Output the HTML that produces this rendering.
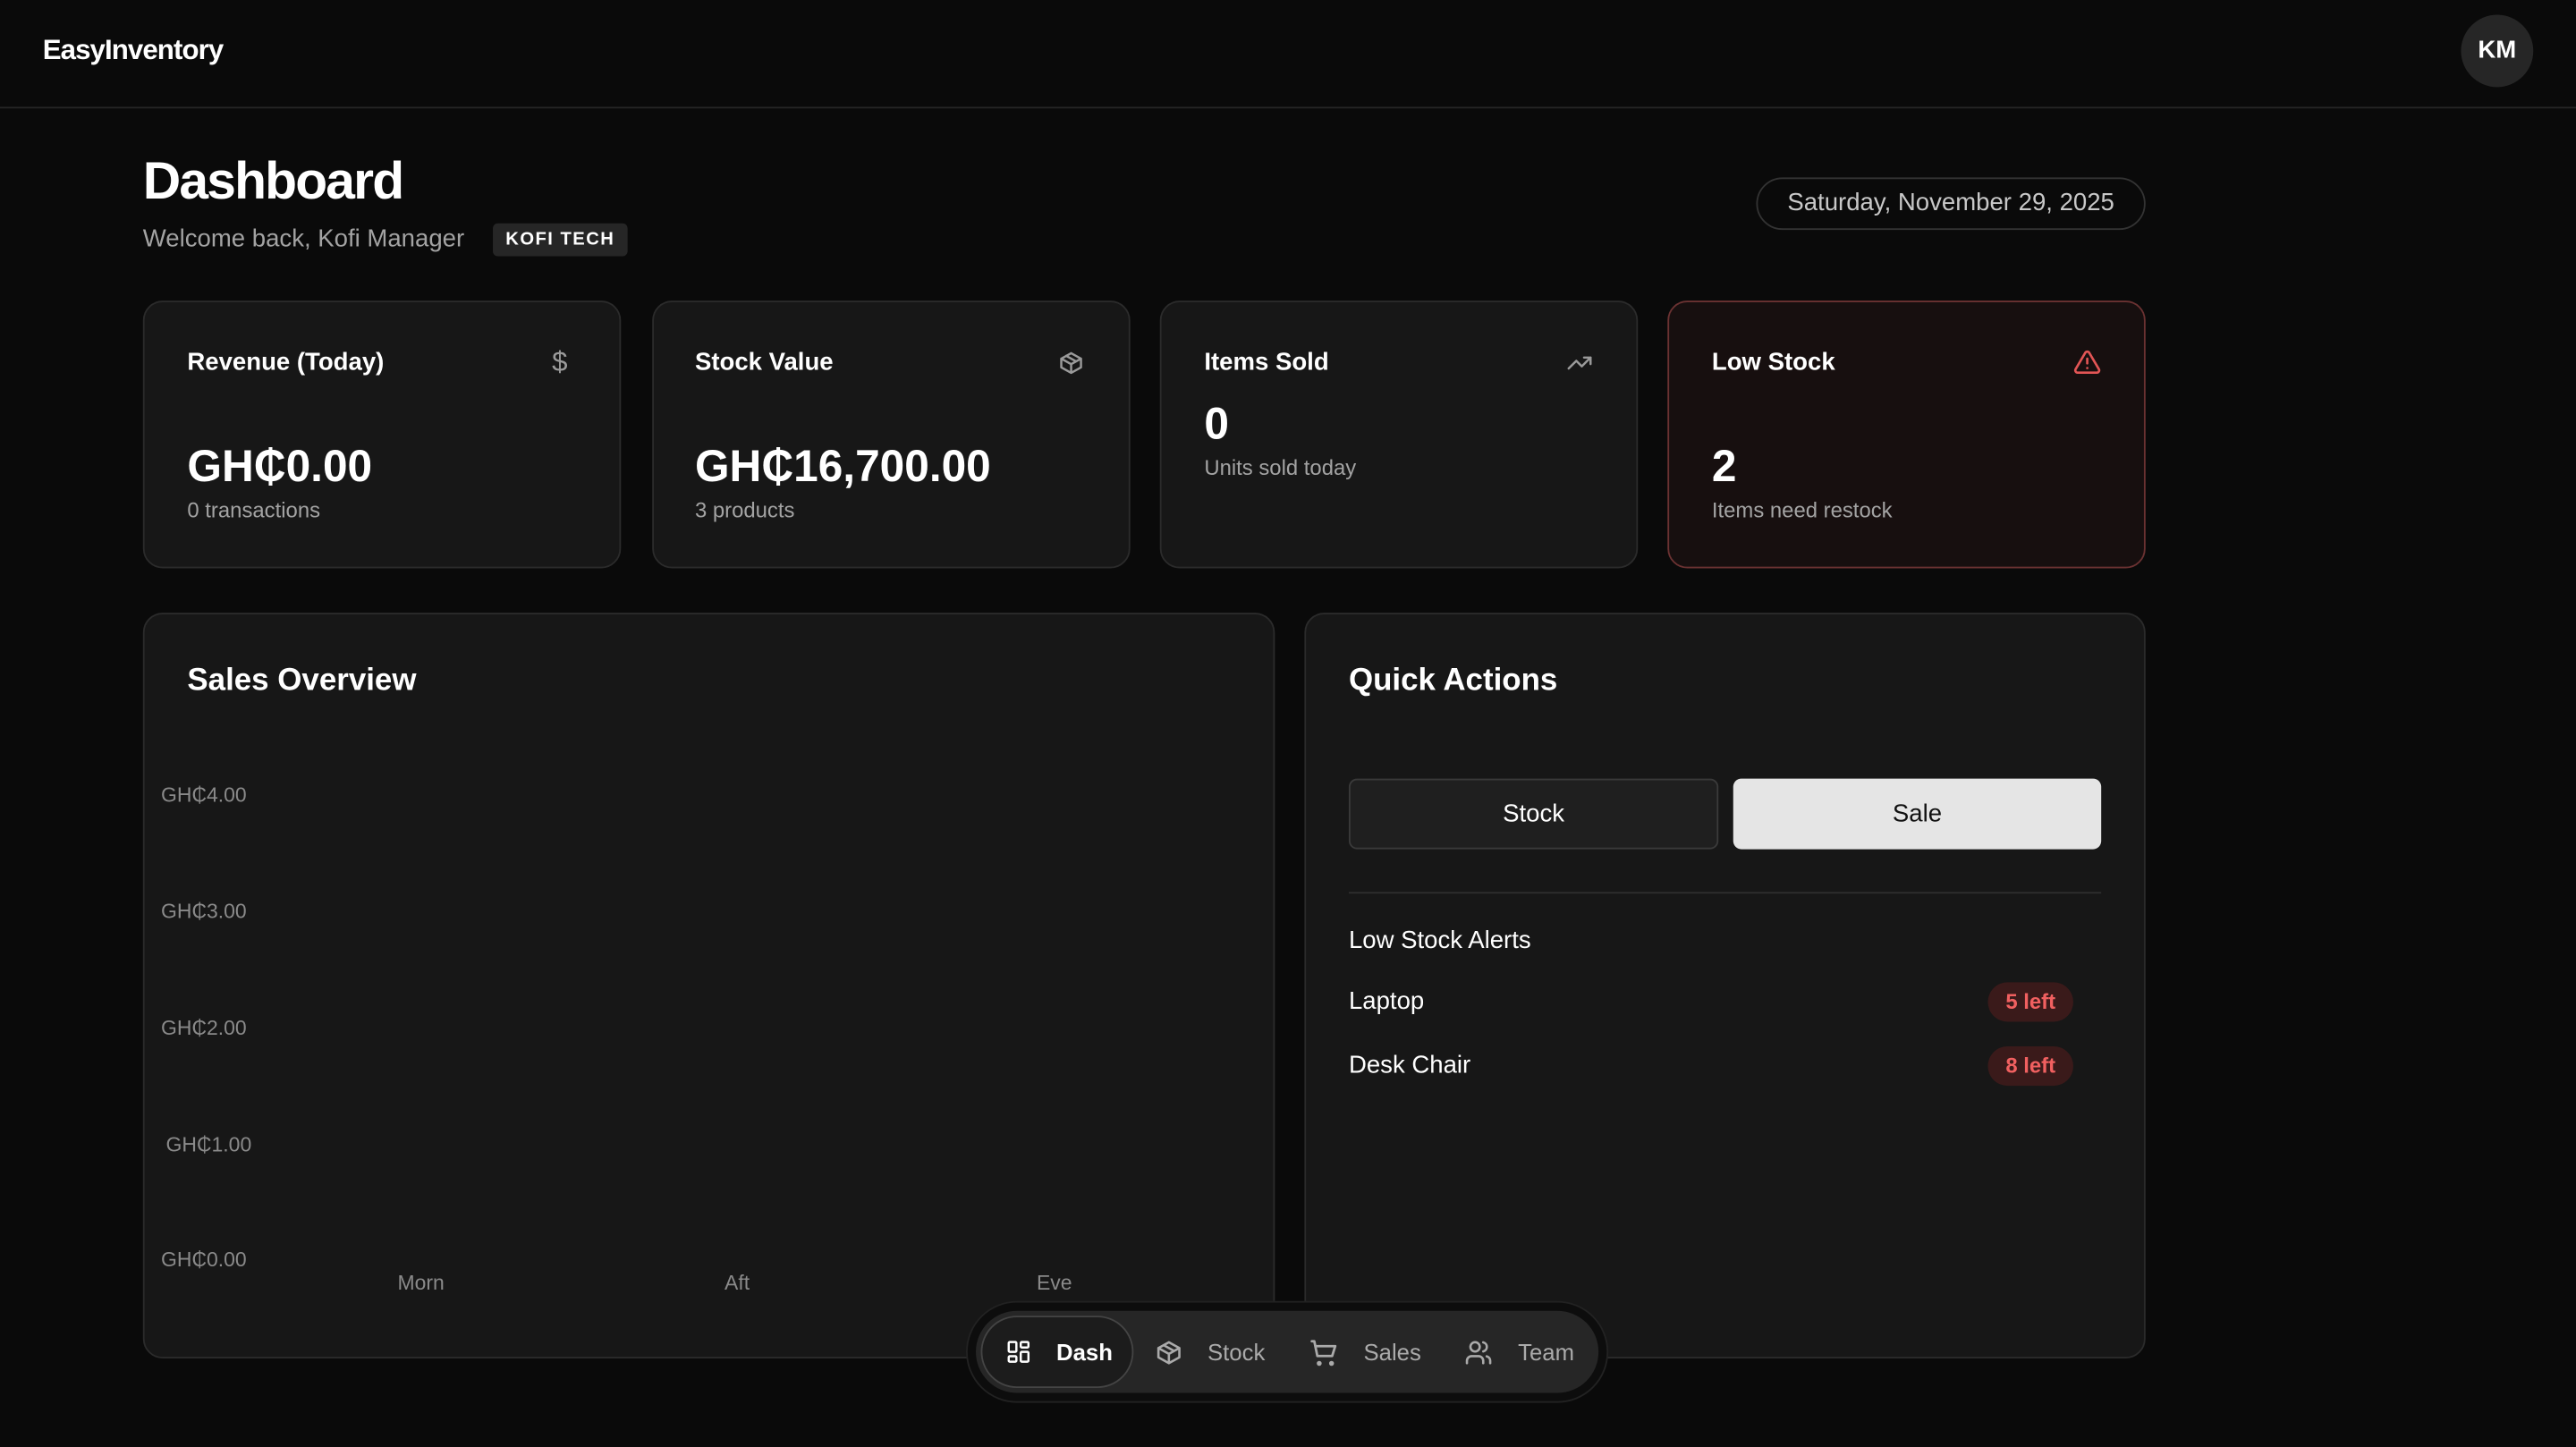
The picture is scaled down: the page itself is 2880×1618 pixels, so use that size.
<!DOCTYPE html>
<html><head><meta charset="utf-8"><style>
*{box-sizing:border-box;margin:0;padding:0}
html,body{width:2880px;height:1618px;background:#0a0a0a;overflow:hidden}
#w{width:1568px;height:881px;transform:scale(1.836735);transform-origin:0 0;position:relative;font-family:"Liberation Sans",sans-serif;color:#fff}
.a{position:absolute}
.card{position:absolute;background:#171717;border:1px solid #2b2b2b;border-radius:12px}
.t{position:absolute;font-size:15px;font-weight:bold}
.big{position:absolute;font-size:27px;font-weight:bold}
.sub{position:absolute;font-size:13px;color:#a3a3a3}
.ax{position:absolute;font-size:12.5px;color:#8a8a8a}
svg{position:absolute;fill:none;stroke-linecap:round;stroke-linejoin:round}
</style></head><body><div id="w">
<div class="a" style="left:0;top:0;width:1568px;height:66px;border-bottom:1px solid #262626"></div>
<div class="a" style="left:26px;top:21px;font-size:17px;font-weight:bold;letter-spacing:-0.5px">EasyInventory</div>
<div class="a" style="left:1498px;top:9px;width:44px;height:44px;border-radius:50%;background:#262626;font-size:15px;font-weight:bold;text-align:center;line-height:44px">KM</div>
<div class="a" style="left:87px;top:92px;font-size:32px;font-weight:bold;letter-spacing:-1px">Dashboard</div>
<div class="a" style="left:87px;top:137px;font-size:15px;color:#a3a3a3">Welcome back, Kofi Manager</div>
<div class="a" style="left:300px;top:136px;width:82px;height:20px;border-radius:3px;background:#262626;font-size:11px;font-weight:bold;letter-spacing:0.8px;text-align:center;line-height:20px">KOFI TECH</div>
<div class="a" style="left:1069px;top:108px;width:237px;height:32px;border:1px solid #333;border-radius:16px;font-size:15px;color:#c8c8c8;text-align:center;line-height:30px">Saturday, November 29, 2025</div>

<div class="card" style="left:87px;top:183px;width:291px;height:163px"></div>
<div class="t" style="left:114px;top:212px">Revenue (Today)</div>
<div class="a" style="left:336px;top:211px;font-size:17px;color:#9a9a9a">$</div>
<div class="big" style="left:114px;top:269px">GH₵0.00</div>
<div class="sub" style="left:114px;top:303px">0 transactions</div>

<div class="card" style="left:397px;top:183px;width:291px;height:163px"></div>
<div class="t" style="left:423px;top:212px">Stock Value</div>
<svg style="left:644px;top:213px" width="16" height="16" viewBox="0 0 24 24" stroke="#9a9a9a" stroke-width="2"><path d="M21 8l-9-5-9 5v8l9 5 9-5z M3 8l9 5 9-5 M12 13v8 M7.5 5.5l9 5"/></svg>
<div class="big" style="left:423px;top:269px">GH₵16,700.00</div>
<div class="sub" style="left:423px;top:303px">3 products</div>

<div class="card" style="left:706px;top:183px;width:291px;height:163px"></div>
<div class="t" style="left:733px;top:212px">Items Sold</div>
<svg style="left:953px;top:213px" width="17" height="16" viewBox="0 0 24 24" stroke="#9a9a9a" stroke-width="2"><path d="M2 17l7-7 5 5 8-8 M16 7h6v6"/></svg>
<div class="big" style="left:733px;top:243px">0</div>
<div class="sub" style="left:733px;top:277px">Units sold today</div>

<div class="card" style="left:1015px;top:183px;width:291px;height:163px;background:#170f0f;border-color:#6b3232"></div>
<div class="t" style="left:1042px;top:212px">Low Stock</div>
<svg style="left:1262px;top:212px" width="17" height="17" viewBox="0 0 24 24" stroke="#e25555" stroke-width="2"><path d="M10.3 3.9L2 18a2 2 0 0 0 1.7 3h16.6a2 2 0 0 0 1.7-3L13.7 3.9a2 2 0 0 0-3.4 0z M12 9v4 M12 17h.01"/></svg>
<div class="big" style="left:1042px;top:269px">2</div>
<div class="sub" style="left:1042px;top:303px">Items need restock</div>

<div class="card" style="left:87px;top:373px;width:689px;height:454px"></div>
<div class="a" style="left:114px;top:404px;font-size:19px;font-weight:bold">Sales Overview</div>
<div class="ax" style="left:98px;top:477px">GH₵4.00</div>
<div class="ax" style="left:98px;top:548px">GH₵3.00</div>
<div class="ax" style="left:98px;top:619px">GH₵2.00</div>
<div class="ax" style="left:101px;top:690px">GH₵1.00</div>
<div class="ax" style="left:98px;top:760px">GH₵0.00</div>
<div class="ax" style="left:242px;top:774px">Morn</div>
<div class="ax" style="left:441px;top:774px">Aft</div>
<div class="ax" style="left:631px;top:774px">Eve</div>

<div class="card" style="left:794px;top:373px;width:512px;height:454px"></div>
<div class="a" style="left:821px;top:404px;font-size:19px;font-weight:bold">Quick Actions</div>
<div class="a" style="left:821px;top:474px;width:225px;height:43px;border:1px solid #3a3a3a;border-radius:5px;background:#1f1f1f;font-size:15px;text-align:center;line-height:41px">Stock</div>
<div class="a" style="left:1055px;top:474px;width:224px;height:43px;border-radius:5px;background:#e5e5e5;color:#111;font-size:15px;text-align:center;line-height:43px">Sale</div>
<div class="a" style="left:821px;top:543px;width:458px;height:1px;background:#2e2e2e"></div>
<div class="a" style="left:821px;top:564px;font-size:15px">Low Stock Alerts</div>
<div class="a" style="left:821px;top:601px;font-size:15px">Laptop</div>
<div class="a" style="left:1210px;top:598px;width:52px;height:24px;border-radius:12px;background:#3a1a1a;color:#f06060;font-size:13px;font-weight:bold;text-align:center;line-height:24px">5 left</div>
<div class="a" style="left:821px;top:640px;font-size:15px">Desk Chair</div>
<div class="a" style="left:1210px;top:637px;width:52px;height:24px;border-radius:12px;background:#3a1a1a;color:#f06060;font-size:13px;font-weight:bold;text-align:center;line-height:24px">8 left</div>

<div class="a" style="left:588px;top:792px;width:391px;height:62px;border-radius:31px;background:#0d0d0d;border:1px solid #222"></div>
<div class="a" style="left:594px;top:798px;width:379px;height:50px;border-radius:25px;background:#262626"></div>
<div class="a" style="left:597px;top:801px;width:93px;height:44px;border-radius:22px;background:#1c1c1c;border:1px solid #444"></div>
<svg style="left:612px;top:815px" width="16" height="16" viewBox="0 0 24 24" stroke="#fff" stroke-width="2"><rect x="3" y="3" width="7" height="9" rx="1"/><rect x="14" y="3" width="7" height="5" rx="1"/><rect x="14" y="12" width="7" height="9" rx="1"/><rect x="3" y="16" width="7" height="5" rx="1"/></svg>
<div class="a" style="left:643px;top:815px;font-size:14px;font-weight:bold">Dash</div>
<svg style="left:703px;top:815px" width="17" height="17" viewBox="0 0 24 24" stroke="#aaa" stroke-width="2"><path d="M21 8l-9-5-9 5v8l9 5 9-5z M3 8l9 5 9-5 M12 13v8 M7.5 5.5l9 5"/></svg>
<div class="a" style="left:735px;top:815px;font-size:14px;color:#aaa">Stock</div>
<svg style="left:797px;top:815px" width="18" height="18" viewBox="0 0 24 24" stroke="#aaa" stroke-width="2"><path d="M2 2h2l2.5 12h12L21 6H5.5"/><circle cx="8" cy="20" r="1"/><circle cx="18" cy="20" r="1"/></svg>
<div class="a" style="left:830px;top:815px;font-size:14px;color:#aaa">Sales</div>
<svg style="left:891px;top:815px" width="18" height="17" viewBox="0 0 24 24" stroke="#aaa" stroke-width="2"><circle cx="9" cy="7" r="4"/><path d="M2 21v-2a4 4 0 0 1 4-4h6a4 4 0 0 1 4 4v2 M16 3.1a4 4 0 0 1 0 7.8 M22 21v-2a4 4 0 0 0-3-3.9"/></svg>
<div class="a" style="left:924px;top:815px;font-size:14px;color:#aaa">Team</div>
</div></body></html>
